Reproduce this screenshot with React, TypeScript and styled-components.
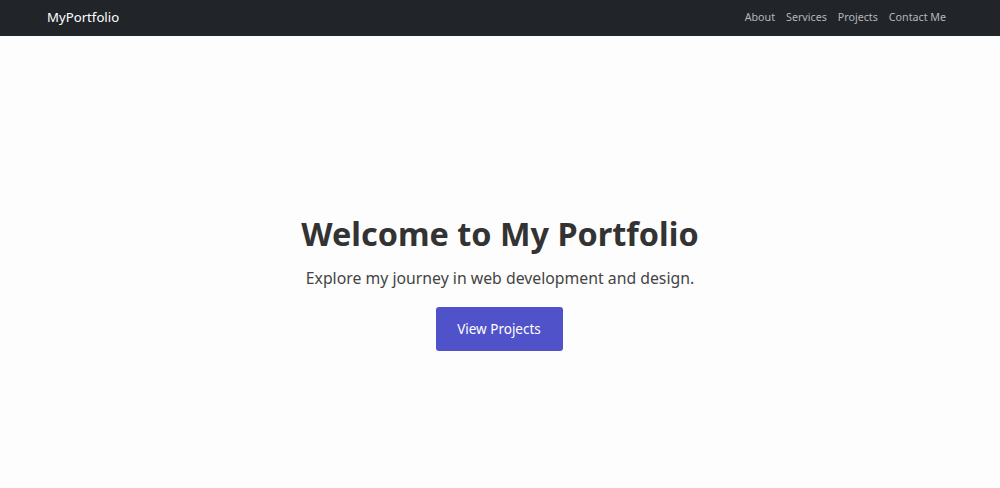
import React from "react";
import styled, { createGlobalStyle } from "styled-components";

const Global = createGlobalStyle`
  html, body { margin: 0; padding: 0; }
  body {
    font-family: "Segoe UI", "Noto Sans", sans-serif;
    background: #fdfdfd;
    color: #333;
  }
`;

const Nav = styled.nav`
  height: 36px;
  background: #212529;
  display: flex;
  align-items: center;
  justify-content: space-between;
  padding: 0 54px 2px 47px;
  box-sizing: border-box;
`;

const Brand = styled.a`
  color: #fff;
  font-size: 13.2px;
  line-height: 1;
  margin-top: 2px;
  text-decoration: none;
`;

const Links = styled.ul`
  display: flex;
  gap: 11px;
  list-style: none;
  margin: 0 0 5px;
  padding: 0;
  line-height: 1;
`;

const LinkItem = styled.a`
  color: #b5b7b9;
  font-size: 10.7px;
  text-decoration: none;
`;

const Hero = styled.main`
  height: 452px;
  display: flex;
  flex-direction: column;
  align-items: center;
  justify-content: center;
  padding-top: 37px;
  box-sizing: border-box;
`;

const Title = styled.h1`
  margin: 0 0 12px;
  font-size: 32.4px;
  font-weight: 700;
  color: #333;
`;

const Sub = styled.p`
  margin: 0 0 18px;
  font-size: 15.8px;
  color: #444;
`;

const Button = styled.a`
  display: inline-flex;
  align-items: center;
  justify-content: center;
  width: 127px;
  height: 44px;
  margin-right: 2px;
  background: #4f52c9;
  color: #fff;
  border-radius: 3px;
  font-size: 13.5px;
  text-decoration: none;
`;

export default function App() {
  return (
    <>
      <Global />
      <Nav>
        <Brand href="#">MyPortfolio</Brand>
        <Links>
          {["About", "Services", "Projects", "Contact Me"].map((l) => (
            <li key={l}>
              <LinkItem href="#">{l}</LinkItem>
            </li>
          ))}
        </Links>
      </Nav>
      <Hero>
        <Title>Welcome to My Portfolio</Title>
        <Sub>Explore my journey in web development and design.</Sub>
        <Button href="#">View Projects</Button>
      </Hero>
    </>
  );
}
